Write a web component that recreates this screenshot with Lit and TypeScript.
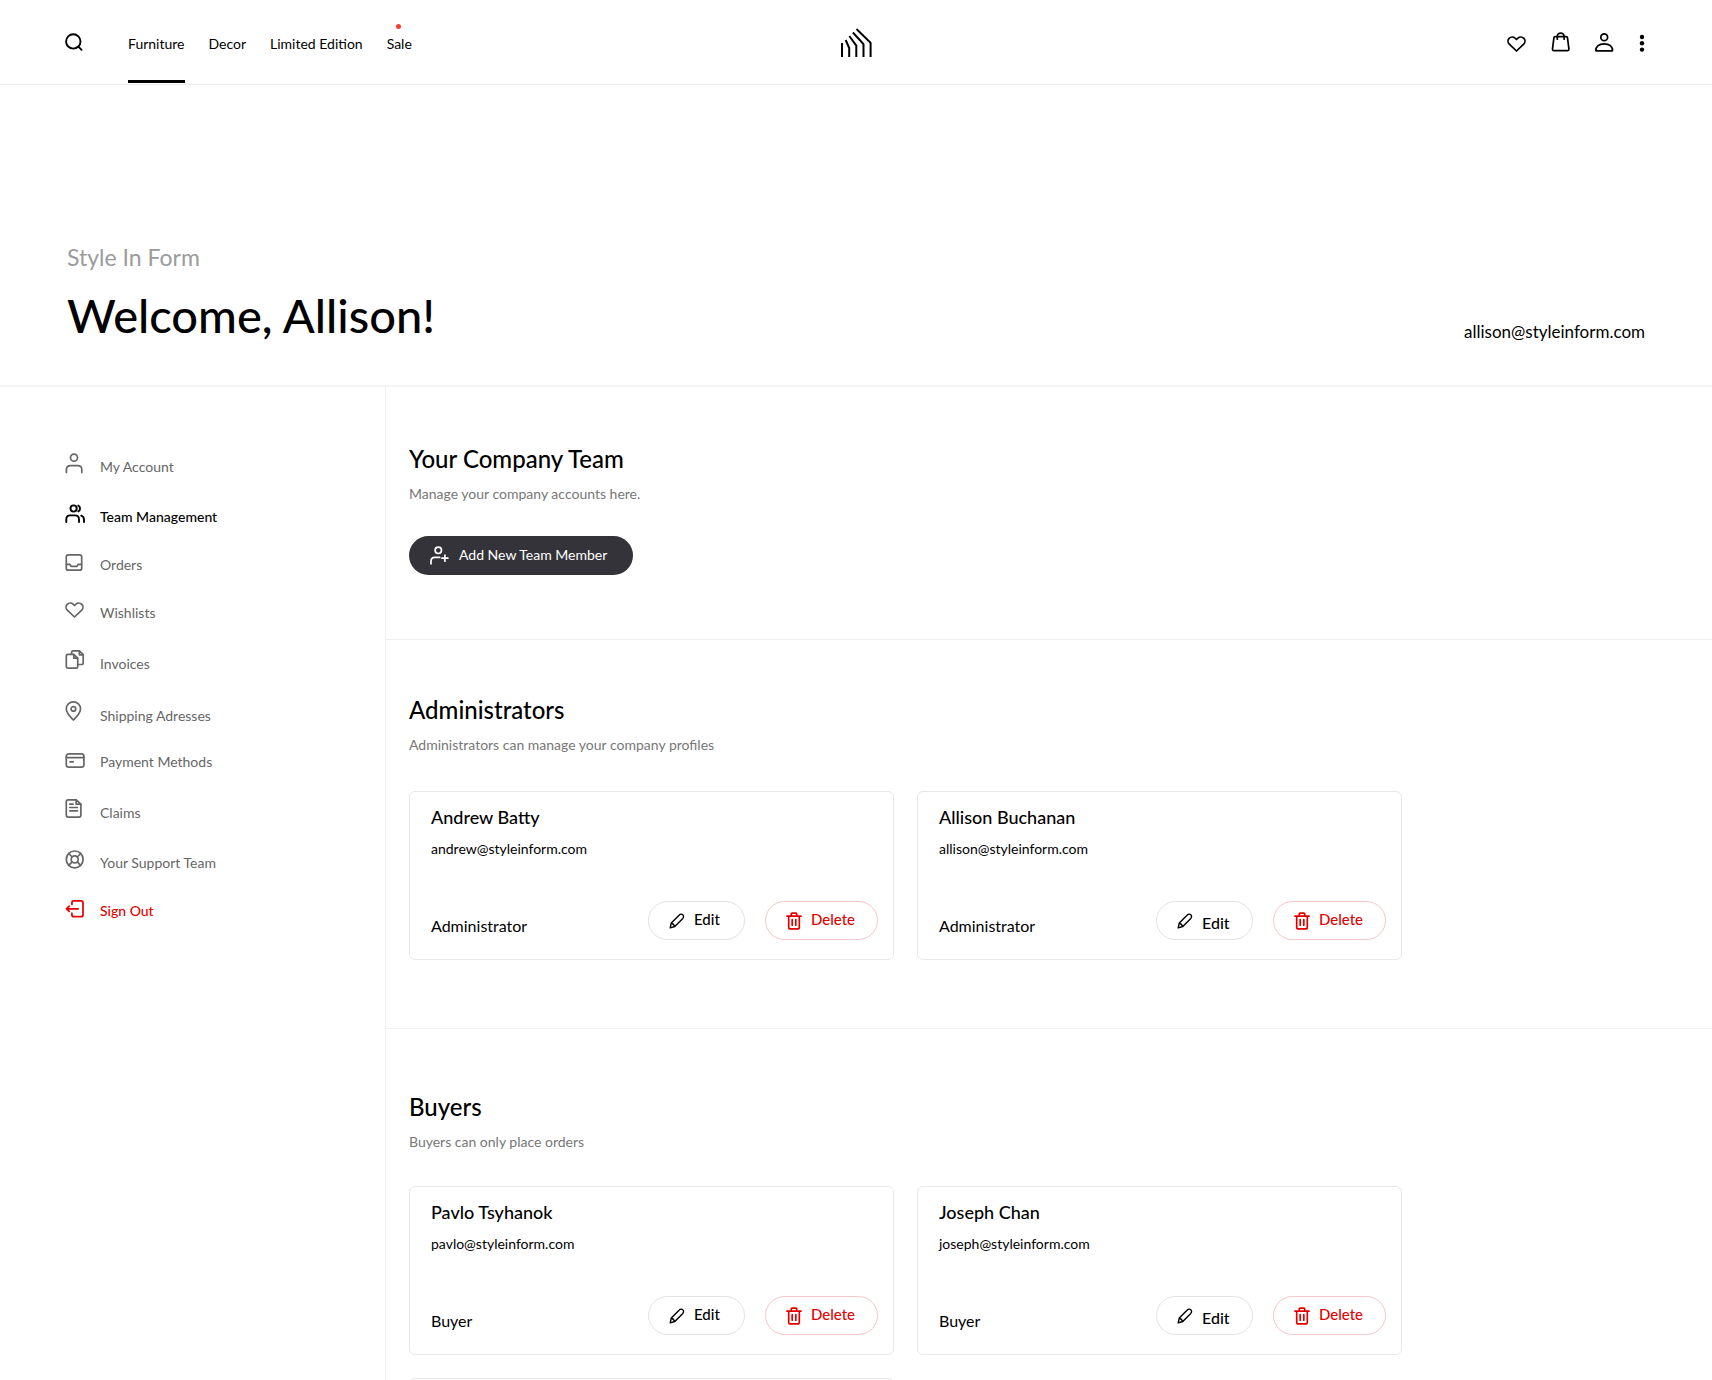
import { LitElement, html, css, svg, nothing, type SVGTemplateResult } from "lit";
import { customElement, property } from "lit/decorators.js";
import { classMap } from "lit/directives/class-map.js";

interface Glyph {
  width: number;
  height: number;
  stroke?: number;
  art: SVGTemplateResult;
}

const heartPath =
  "M9.5 15 L2.3 8.1 C0.7 6.5 0.6 3.9 2.1 2.3 C3.8 0.6 6.5 0.6 8.1 2.2 L9.5 3.5 L10.9 2.2 C12.5 0.6 15.2 0.6 16.9 2.3 C18.4 3.9 18.3 6.5 16.7 8.1 Z";

const glyphs: Record<string, Glyph> = {
  search: {
    width: 18,
    height: 18,
    stroke: 1.9,
    art: svg`<circle cx="8.3" cy="8.4" r="7.2"/><path d="M13.4 13.6 L16.6 16.8"/>`,
  },
  heart: {
    width: 20,
    height: 16,
    art: svg`<path d=${heartPath}/>`,
  },
  bag: {
    width: 20,
    height: 20,
    art: svg`<path d="M4.2 4.6 H15.2 Q16.4 4.6 16.5 5.8 L17.9 16.9 Q18 18.7 16.4 18.7 H3 Q1.4 18.7 1.5 16.9 L2.9 5.8 Q3 4.6 4.2 4.6 Z"/><path d="M6.3 7.2 V4.4 C6.3 0.1 13.1 0.1 13.1 4.4 V7.2"/>`,
  },
  person: {
    width: 20,
    height: 19,
    art: svg`<circle cx="9.2" cy="4.3" r="3.4"/><path d="M0.9 17.8 C0.7 13.4 4 10.9 9.2 10.9 C14.4 10.9 17.7 13.4 17.5 17.8 Z"/>`,
  },
  dots: {
    width: 6,
    height: 18,
    stroke: 0,
    art: svg`<g fill="currentColor"><circle cx="3" cy="3" r="2.2"/><circle cx="3" cy="9.3" r="2.2"/><circle cx="3" cy="15.6" r="2.2"/></g>`,
  },
  account: {
    width: 20,
    height: 19,
    art: svg`<circle cx="9" cy="4.7" r="3.5"/><path d="M1.4 19.5 V16.6 Q1.4 12.6 5.4 12.6 H12.8 Q16.8 12.6 16.8 16.6 V19.5"/>`,
  },
  team: {
    width: 20,
    height: 18,
    stroke: 1.9,
    art: svg`<circle cx="8.6" cy="4.5" r="3.1"/><path d="M13.3 1.6 C15.6 2.8 15.6 6.2 13.3 7.4"/><path d="M1.3 18 V15.5 Q1.3 11.4 5.2 11.4 H10 Q14 11.4 14 15.5 V18"/><path d="M16.2 11.7 Q19 12.5 19 15.7 V18"/>`,
  },
  tray: {
    width: 20,
    height: 16,
    art: svg`<rect x="1.3" y="0.9" width="15.4" height="15.3" rx="2"/><path d="M1.5 10.4 H4.6 C5.4 10.4 5.5 12.3 6.6 12.3 H11.4 C12.5 12.3 12.6 10.4 13.4 10.4 H16.5"/>`,
  },
  copies: {
    width: 20,
    height: 19,
    art: svg`<path d="M2.8 4.4 H8.8 L12.7 8.2 V16.4 Q12.7 18.1 11 18.1 H3 Q1.3 18.1 1.3 16.4 V6 Q1.3 4.4 2.8 4.4 Z"/><path d="M8.8 4.5 V8.2 H12.6"/><path d="M6.6 4.2 V2.6 Q6.6 0.9 8.3 0.9 H14.4 L18.2 4.7 V12.8 Q18.2 14.5 16.5 14.5 H13"/><path d="M14.4 1 V4.8 H18"/>`,
  },
  pin: {
    width: 20,
    height: 20,
    art: svg`<path d="M8.4 19 C5.4 15.9 1.3 12.2 1.3 8 C1.3 4 4.4 0.9 8.4 0.9 C12.4 0.9 15.5 4 15.5 8 C15.5 12.2 11.4 15.9 8.4 19 Z"/><circle cx="8.4" cy="7.9" r="2.3"/>`,
  },
  card: {
    width: 20,
    height: 14,
    art: svg`<rect x="1.3" y="0.8" width="17.6" height="13.4" rx="2.4"/><path d="M1.3 4.7 H18.9 M5 8.8 H8.2"/>`,
  },
  note: {
    width: 20,
    height: 19,
    art: svg`<path d="M3.2 0.9 H11.2 L15.9 5.2 V16.1 Q15.9 18.2 13.9 18.2 H3.2 Q1.3 18.2 1.3 16.1 V2.9 Q1.3 0.9 3.2 0.9 Z"/><path d="M11.2 1 V5.2 H15.8 M4.8 5.2 H8 M4.8 8.5 H12.4 M4.8 11.8 H12.4"/>`,
  },
  ring: {
    width: 20,
    height: 18,
    art: svg`<circle cx="9.7" cy="9.4" r="8.4"/><circle cx="9.7" cy="9.4" r="3.5"/><path d="M3.8 3.5 L7.1 7 M15.6 3.5 L12.3 7 M3.8 15.3 L7.1 11.8 M15.6 15.3 L12.3 11.8"/>`,
  },
  exit: {
    width: 20,
    height: 16,
    art: svg`<path d="M6.9 4.4 V2.9 Q6.9 0.9 8.9 0.9 H16 Q18 0.9 18 2.9 V14.7 Q18 16.7 16 16.7 H8.9 Q6.9 16.7 6.9 14.7 V13.2"/><path d="M13.2 8.8 H1.6 M4.2 6.2 L1.5 8.8 L4.2 11.4"/>`,
  },
  invite: {
    width: 20,
    height: 19,
    art: svg`<circle cx="9.3" cy="4.3" r="3.2"/><path d="M2 17.8 V15.4 Q2 11.4 6 11.4 H10.7"/><path d="M15.9 9.2 V15.2 M12.9 12.2 H18.9"/>`,
  },
  pencil: {
    width: 16,
    height: 16,
    stroke: 1.4,
    art: svg`<path d="M1.2 14.8 L2.3 10.1 L10.3 2 C11.3 0.9 12.9 0.9 13.8 1.8 C14.8 2.7 14.8 4.3 13.8 5.4 L5.8 13.5 Z"/><path d="M2.4 10.2 Q4.8 10.8 5.7 13.4"/>`,
  },
  trash: {
    width: 16,
    height: 18,
    stroke: 1.7,
    art: svg`<path d="M1 4.2 H15 M5.3 4 V1.9 Q5.3 1.1 6.1 1.1 H9.9 Q10.7 1.1 10.7 1.9 V4 M2.7 4.4 V15.2 Q2.7 16.9 4.4 16.9 H11.6 Q13.3 16.9 13.3 15.2 V4.4 M6.2 7.6 V13.2 M9.8 7.6 V13.2"/>`,
  },
  logo: {
    width: 34,
    height: 30,
    stroke: 2,
    art: svg`<path stroke-linecap="butt" stroke-linejoin="miter" d="M3 16 V30 M6.7 13 L10.2 21 V30 M10.3 9 L17.3 18.6 V30 M13.9 5.5 L24.5 17.2 V30 M17.5 2 L31.6 15.8 V30"/>`,
  },
};

@customElement("line-icon")
export class LineIcon extends LitElement {
  @property() name = "";

  static styles = css`
    :host {
      display: inline-block;
      flex: none;
      line-height: 0;
    }
    svg {
      display: inline-block;
      overflow: visible;
      vertical-align: baseline;
    }
  `;

  render() {
    const g = glyphs[this.name];
    if (!g) return nothing;
    return html`<svg
      width=${g.width}
      height=${g.height}
      viewBox="0 0 ${g.width} ${g.height}"
      fill="none"
      stroke="currentColor"
      stroke-width=${g.stroke ?? 1.7}
      stroke-linecap="round"
      stroke-linejoin="round"
      aria-hidden="true"
    >${g.art}</svg>`;
  }
}

@customElement("member-card")
export class MemberCard extends LitElement {
  @property() name = "";
  @property() email = "";
  @property() role = "";
  @property({ type: Boolean }) prominent = false;

  static styles = css`
    :host {
      display: block;
      box-sizing: border-box;
      min-height: 169px;
      padding: 13px 15px 19px 21px;
      border: 1px solid #e8e8ea;
      border-radius: 6px;
    }
    .name {
      margin: 0 0 10px;
      font-size: 18px;
      line-height: 24px;
      font-weight: 500;
    }
    .email {
      margin: 0 0 42px;
      font-size: 14px;
      line-height: 20px;
    }
    .foot {
      display: flex;
      align-items: flex-end;
      gap: 20px;
    }
    .role {
      flex: 1;
      margin: 0 0 4px;
      font-size: 16px;
      line-height: 20px;
    }
    button {
      display: flex;
      align-items: center;
      gap: 9px;
      box-sizing: border-box;
      height: 39px;
      min-width: 97px;
      padding: 0 20px;
      border: 1px solid #e2e2e4;
      border-radius: 20px;
      background: #fff;
      color: #000;
      font: inherit;
      font-size: 15px;
      line-height: 20px;
      font-weight: 500;
      cursor: pointer;
    }
    .label {
      padding-bottom: 3px;
    }
    .prominent .label {
      padding: 4px 0 0;
      font-size: 16px;
    }
    .danger {
      min-width: 113px;
      border-color: #f7c6c8;
      color: #e00000;
    }
  `;

  render() {
    if (!this.name) return nothing;
    return html`
      <h3 class="name">${this.name}</h3>
      <p class="email">${this.email}</p>
      <div class="foot">
        <p class="role">${this.role}</p>
        <button type="button" class=${classMap({ prominent: this.prominent })}>
          <line-icon name="pencil"></line-icon><span class="label">Edit</span>
        </button>
        <button type="button" class="danger">
          <line-icon name="trash"></line-icon><span class="label">Delete</span>
        </button>
      </div>
    `;
  }
}

const menu = [
  { icon: "account", label: "My Account" },
  { icon: "team", label: "Team Management", tone: "current" },
  { icon: "tray", label: "Orders" },
  { icon: "heart", label: "Wishlists" },
  { icon: "copies", label: "Invoices" },
  { icon: "pin", label: "Shipping Adresses" },
  { icon: "card", label: "Payment Methods" },
  { icon: "note", label: "Claims" },
  { icon: "ring", label: "Your Support Team" },
  { icon: "exit", label: "Sign Out", tone: "exit" },
];

const groups = [
  {
    key: "admins",
    title: "Administrators",
    note: "Administrators can manage your company profiles",
    role: "Administrator",
    members: [
      { name: "Andrew Batty", email: "andrew@styleinform.com" },
      { name: "Allison Buchanan", email: "allison@styleinform.com" },
    ],
  },
  {
    key: "buyers",
    title: "Buyers",
    note: "Buyers can only place orders",
    role: "Buyer",
    members: [
      { name: "Pavlo Tsyhanok", email: "pavlo@styleinform.com" },
      { name: "Joseph Chan", email: "joseph@styleinform.com" },
      { name: "", email: "" },
    ],
  },
];

@customElement("app-root")
export class AppRoot extends LitElement {
  static styles = css`
    :host {
      display: flex;
      flex-direction: column;
      min-height: 100vh;
      background: #fff;
      color: #000;
      font-family: "Lato", "Liberation Sans", sans-serif;
    }
    a {
      color: inherit;
      text-decoration: none;
    }
    ul {
      margin: 0;
      padding: 0;
      list-style: none;
    }
    .icon-button {
      display: flex;
      padding: 0;
      border: 0;
      background: none;
      color: inherit;
      cursor: pointer;
    }
    .top {
      display: grid;
      grid-template-columns: 1fr auto 1fr;
      height: 84px;
      padding: 0 65px;
      border-bottom: 1px solid #ececee;
    }
    .left {
      display: flex;
      align-items: center;
      gap: 45px;
    }
    .nav {
      display: flex;
      gap: 24px;
      align-self: stretch;
    }
    .nav a {
      position: relative;
      display: flex;
      align-items: center;
      box-sizing: border-box;
      height: 83px;
      padding-top: 8px;
      border-bottom: 3px solid transparent;
      font-size: 14px;
      line-height: 20px;
    }
    .nav a.active {
      border-bottom-color: #000;
    }
    .sale::before {
      content: "";
      position: absolute;
      top: 24px;
      left: 50%;
      width: 5px;
      height: 5px;
      margin-left: -3px;
      border-radius: 50%;
      background: #ff3b30;
    }
    .brand {
      align-self: center;
      display: flex;
    }
    .right {
      display: flex;
      align-items: flex-end;
      justify-content: flex-end;
      gap: 24px;
      padding: 0 2px 32px 0;
    }
    .hero {
      display: flex;
      justify-content: space-between;
      align-items: flex-end;
      padding: 157px 67px 41px;
      border-bottom: 2px solid #f5f5f5;
    }
    .company {
      margin: 0 0 14px;
      color: #9b9b9b;
      font-size: 23px;
      line-height: 30px;
    }
    .welcome {
      margin: 0;
      font-size: 47px;
      line-height: 58px;
      font-weight: 500;
    }
    .contact {
      margin-bottom: 2px;
      font-size: 17px;
      line-height: 20px;
    }
    .body {
      flex: 1;
      display: grid;
      grid-template-columns: 386px minmax(0, 1fr);
    }
    .side {
      padding: 66px 24px 0 65px;
      border-right: 1px solid #f0f0f0;
    }
    .menu {
      display: flex;
      flex-direction: column;
      gap: 29px;
    }
    .menu a {
      display: flex;
      align-items: baseline;
      gap: 15px;
      color: #666;
      font-size: 14px;
      line-height: 16px;
    }
    .menu a.current {
      color: #000;
      font-weight: 500;
    }
    .menu a.exit {
      color: #e00000;
      font-weight: 500;
    }
    .section {
      padding: 57px 23px 64px;
      border-bottom: 1px solid #f0f0f0;
    }
    .admins {
      padding: 55px 23px 68px;
    }
    .buyers {
      padding-top: 63px;
      border-bottom: 0;
    }
    h2 {
      margin: 0 0 10px;
      font-size: 24px;
      line-height: 30px;
      font-weight: 500;
    }
    .note {
      margin: 0;
      color: #777;
      font-size: 14px;
      line-height: 20px;
    }
    .add {
      display: flex;
      align-items: center;
      gap: 10px;
      height: 39px;
      margin-top: 32px;
      padding: 0 26px 0 20px;
      border: 0;
      border-radius: 20px;
      background: #343339;
      color: #fff;
      font: inherit;
      font-size: 14px;
      line-height: 20px;
      cursor: pointer;
    }
    .add span {
      padding-bottom: 2px;
    }
    .cards {
      display: grid;
      grid-template-columns: repeat(2, minmax(0, 485px));
      gap: 23px;
      margin-top: 36px;
    }
    .buyers .cards {
      margin-top: 34px;
    }
  `;

  render() {
    return html`
      <header class="top">
        <div class="left">
          <button class="icon-button" type="button" aria-label="Search">
            <line-icon name="search"></line-icon>
          </button>
          <nav class="nav">
            <a class="active" href="#furniture">Furniture</a>
            <a href="#decor">Decor</a>
            <a href="#limited">Limited Edition</a>
            <a class="sale" href="#sale">Sale</a>
          </nav>
        </div>
        <a class="brand" href="#home" aria-label="Home"><line-icon name="logo"></line-icon></a>
        <div class="right">
          <button class="icon-button" type="button" aria-label="Wishlist"><line-icon name="heart"></line-icon></button>
          <button class="icon-button" type="button" aria-label="Bag"><line-icon name="bag"></line-icon></button>
          <button class="icon-button" type="button" aria-label="Account"><line-icon name="person"></line-icon></button>
          <button class="icon-button" type="button" aria-label="More"><line-icon name="dots"></line-icon></button>
        </div>
      </header>
      <div class="hero">
        <div>
          <p class="company">Style In Form</p>
          <h1 class="welcome">Welcome, Allison!</h1>
        </div>
        <a class="contact" href="mailto:allison@styleinform.com">allison@styleinform.com</a>
      </div>
      <div class="body">
        <nav class="side">
          <ul class="menu">
            ${menu.map(
              (item) => html`<li>
                <a class=${item.tone ?? ""} href="#${item.icon}">
                  <line-icon name=${item.icon}></line-icon><span>${item.label}</span>
                </a>
              </li>`
            )}
          </ul>
        </nav>
        <main>
          <section class="section">
            <h2>Your Company Team</h2>
            <p class="note">Manage your company accounts here.</p>
            <button class="add" type="button">
              <line-icon name="invite"></line-icon><span>Add New Team Member</span>
            </button>
          </section>
          ${groups.map(
            (group) => html`<section class="section ${group.key}">
              <h2>${group.title}</h2>
              <p class="note">${group.note}</p>
              <div class="cards">
                ${group.members.map(
                  (m, i) => html`<member-card
                    .name=${m.name}
                    .email=${m.email}
                    .role=${group.role}
                    .prominent=${i % 2 === 1}
                  ></member-card>`
                )}
              </div>
            </section>`
          )}
        </main>
      </div>
    `;
  }
}
